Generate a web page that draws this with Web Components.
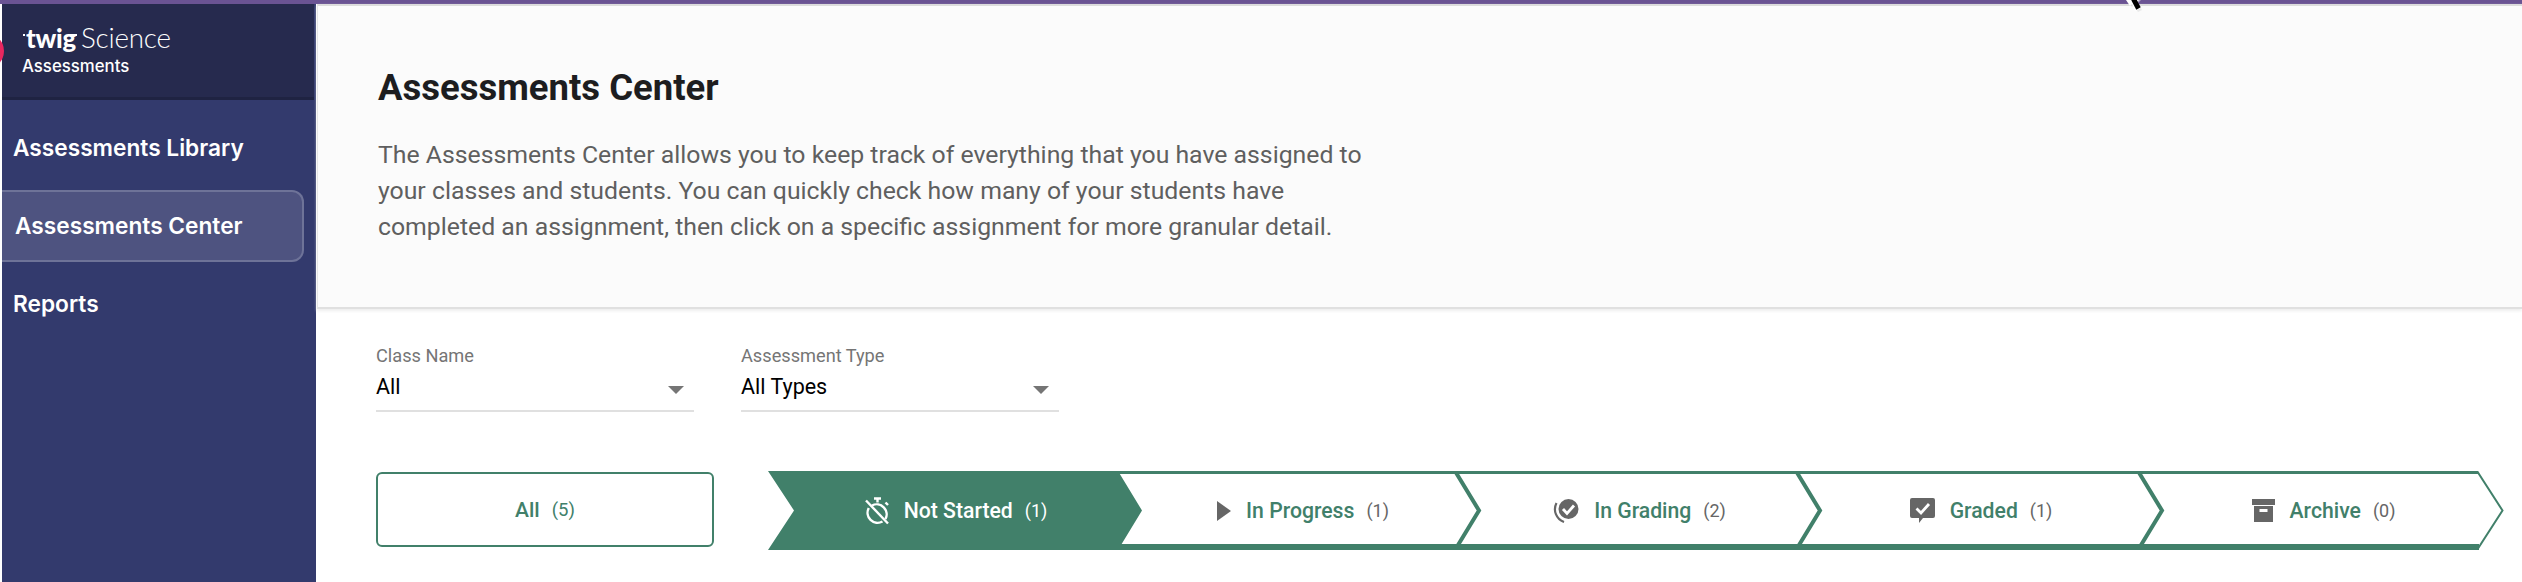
<!DOCTYPE html>
<html><head><meta charset="utf-8"><style>
html,body{margin:0;padding:0;background:#fff;height:582px;overflow:hidden}
body{font-family:Roboto,sans-serif}
</style></head><body>
<app-shell>
<side-bar slot="side">
<nav-item>Assessments Library</nav-item>
<nav-item active>Assessments Center</nav-item>
<nav-item>Reports</nav-item>
</side-bar>
<intro-panel slot="main" heading="Assessments Center">The Assessments Center allows you to keep track of everything that you have assigned to<br>your classes and students. You can quickly check how many of your students have<br>completed an assignment, then click on a specific assignment for more granular detail.</intro-panel>
<filter-row slot="main">
<select-field label="Class Name" value="All"></select-field>
<select-field label="Assessment Type" value="All Types"></select-field>
</filter-row>
<status-row slot="main">
<all-button>All<span slot="count">(5)</span></all-button>
<chevron-strip>
<chevron-step kind="active" w="374" depth="24" pad="2" first icon="timer" label="Not Started" count="(1)"></chevron-step>
<chevron-step w="364" overlap="24" pad="6" icon="play" label="In Progress" count="(1)"></chevron-step>
<chevron-step w="367" pad="0" icon="grading" label="In Grading" count="(2)"></chevron-step>
<chevron-step w="368" pad="0" icon="graded" label="Graded" count="(1)"></chevron-step>
<chevron-step kind="last" w="365" pad="4" icon="archive" label="Archive" count="(0)"></chevron-step>
</chevron-strip>
</status-row>
</app-shell>
<script>
function def(name,html){customElements.define(name,class extends HTMLElement{constructor(){super();const r=this.attachShadow({mode:'open'});r.innerHTML=typeof html==='function'?html(this):html;}})}
def('app-shell',`<style>
:host{display:block;position:relative;width:2522px;height:582px;overflow:hidden;background:#fff}
.top{height:4px;background:#6a5393}
.body{display:flex;height:578px;padding-left:2px}
.main{flex:1;min-width:0;display:flex;flex-direction:column;padding-left:1px}
.dot{position:absolute;left:-32px;top:33px;width:36px;height:36px;border-radius:50%;background:#e8275f}
.cur{position:absolute;left:2124px;top:0}
</style><div class="top"></div><div class="body"><slot name="side"></slot><div class="main"><slot name="main"></slot></div></div>
<div class="dot"></div>
<svg class="cur" width="28" height="16" viewBox="0 0 28 16"><path d="M3 0L8 7 10 5 14 12 18 10 14 3 17 0Z" fill="#ddd" opacity=".6"/><path d="M2 0L6 6 8 4 11 11 17 8 13 2 15 0Z" fill="#fff"/><path d="M9.500 -1L14.500 8.500" stroke="#000" stroke-width="5"/></svg>`);
def('side-bar',`<style>
:host{display:block;width:314px;height:578px;background:#333a6d;flex:none}
.brand{width:312px;height:96px;box-sizing:border-box;background:#262a4e;border-bottom:3px solid #1f2342;padding:19px 0 0 20px;color:#fff}
.logo{font-family:Lato,sans-serif;line-height:30px;white-space:nowrap;display:flex;align-items:baseline;margin-left:4px;position:relative}
.logo b{font-weight:900;font-size:25.7px;letter-spacing:-.2px}
.logo i{font-style:normal;font-weight:300;font-size:27.800px;margin-left:5px;letter-spacing:-.2px}
.logo::before,.logo::after{content:"";position:absolute;width:2px;height:2px;background:#fff;top:11px}
.logo::before{left:-3px}.logo::after{left:49px}
.sub{font-family:Inter,sans-serif;font-weight:500;font-size:16.800px;line-height:20px;margin-top:3px}
.nav{padding-top:12px}
</style><div class="brand"><div class="logo"><b>twig</b><i>Science</i></div><div class="sub">Assessments</div></div><div class="nav"><slot></slot></div>`);
def('nav-item',`<style>
:host{box-sizing:border-box;width:302px;height:72px;margin-bottom:6px;display:flex;align-items:center;padding:0 0 2px 11px;color:#fff;font-family:Inter,sans-serif;font-weight:600;font-size:22.7px;white-space:nowrap}
:host([active]){background:#4e5380;border:2px solid #6e7398;border-left:0;border-radius:0 12px 12px 0;padding-left:13px}
</style><slot></slot>`);
def('intro-panel',h=>`<style>
:host{display:block;box-sizing:border-box;height:305px;background:#fbfbfb;border-top:2px solid #dcdcdc;border-left:1px solid #e4e4e4;border-bottom:2px solid #e0e0e0;box-shadow:0 2px 3px #eee;padding:61px 0 0 60px}
h1{margin:0;font-weight:700;font-size:36.500px;line-height:42px;color:#1d1d1f}
p{margin:27.500px 0 0;font-size:24.800px;line-height:36px;color:#5f5f5f;white-space:nowrap}
</style><h1>${h.getAttribute('heading')}</h1><p><slot></slot></p>`);
def('filter-row',`<style>
:host{display:flex;gap:47px;padding:36px 0 0 59px}
</style><slot></slot>`);
def('select-field',h=>`<style>
:host{display:block;width:318px;height:67px;box-sizing:border-box;border-bottom:2px solid #e0e0e0;position:relative}
.l{font-size:18.200px;line-height:22px;color:#757575}
.v{font-size:21.500px;line-height:28px;color:#000;margin-top:6px}
.a{position:absolute;right:10px;top:41px;width:0;height:0;border:8px solid transparent;border-top:8px solid #757575;border-bottom:0}
</style><div class="l">${h.getAttribute('label')}</div><div class="v">${h.getAttribute('value')}</div><div class="a"></div>`);
def('status-row',`<style>
:host{display:flex;align-items:flex-start;gap:54px;padding:59px 0 0 59px}
</style><slot></slot>`);
def('all-button',`<style>
:host{display:flex;align-items:center;justify-content:center;gap:12px;box-sizing:border-box;width:338px;height:75px;margin-top:1px;border:2px solid #41806a;border-radius:6px;color:#41806a;font-weight:500;font-size:21px}
::slotted(span){font-weight:400;font-size:18.500px}
</style><slot></slot><slot name="count"></slot>`);
def('chevron-strip',`<style>
:host{display:flex;height:79px}
</style><slot></slot>`);
const ICONS={
timer:`<svg width="24" height="28" viewBox="0 0 24 28" fill="none" stroke="#fff" stroke-width="2.400"><path d="M9 1.500h7M12.500 1.500v4"/><path d="M20.500 5.500l2.500 2.500"/><path d="M7 8.500A10 10 0 0 1 20.500 22M3.800 11A10 10 0 0 0 17.500 24.500"/><path d="M1 3.500l22 23"/></svg>`,
play:`<svg width="14" height="20" viewBox="0 0 14 20"><path d="M0 0L14 10 0 20Z" fill="#666"/></svg>`,
grading:`<svg width="26" height="25" viewBox="0 0 26 25"><circle cx="15.500" cy="11" r="10" fill="#666"/><path d="M10 11l4 4.500L21 7.500" fill="none" stroke="#fff" stroke-width="2.800"/><path d="M3.500 5A13.500 13.500 0 0 0 11 24" fill="none" stroke="#666" stroke-width="2.200"/></svg>`,
graded:`<svg width="25" height="25" viewBox="0 0 25 25"><path d="M2 0H23a2 2 0 0 1 2 2V18a2 2 0 0 1-2 2H13l-4 5V20H2a2 2 0 0 1-2-2V2a2 2 0 0 1 2-2Z" fill="#666"/><path d="M6.500 10.500l4.500 4.500 8-9" fill="none" stroke="#fff" stroke-width="2.800"/></svg>`,
archive:`<svg width="23" height="23" viewBox="0 0 23 23"><path d="M0 0H23V6H0ZM2 7H21V23H2Z" fill="#666"/><rect x="7.500" y="10" width="8" height="3" fill="#fff"/></svg>`};
def('chevron-step',h=>{
const w=+h.getAttribute('w'),k=h.getAttribute('kind')||'',first=h.hasAttribute('first');
const ov=h.getAttribute('overlap')||26,d=+(h.getAttribute('depth')||26);
const H=79,t=w-d,m=39.5;
let shape;
if(k==='active')shape=`<path d="M0 0H${t}L${w} ${m} ${t} ${H}H0L26 ${m}Z" fill="#41806a"/>`;
else{
const sw=k==='last'?2:4, tip=k==='last'?w-1.500:w-3;
shape=`<path d="M0 1.500H${t}" stroke="#41806a" stroke-width="3" fill="none"/><path d="M0 76H${t+1}" stroke="#41806a" stroke-width="6" fill="none"/><path d="M${t-1} 0L${tip} ${m} ${t-1} ${H}" stroke="#41806a" stroke-width="${sw}" fill="none"/>`;
}
return `<style>
:host{display:block;position:relative;width:${w}px;height:79px;flex:none;${first?'':`margin-left:-${ov}px;`}}
svg.bg{position:absolute;left:0;top:0}
.c{position:relative;box-sizing:border-box;height:100%;display:flex;align-items:center;justify-content:center;padding-left:${h.getAttribute('pad')||0}px;font-size:21.200px;font-weight:500;color:${k==='active'?'#fff':'#41806a'};white-space:nowrap}
.i{display:flex;margin-right:15px}
.n{margin-left:12px;font-weight:400;font-size:18px;color:${k==='active'?'#fff':'#666'}}
</style><svg class="bg" width="${w}" height="79" viewBox="0 0 ${w} 79">${shape}</svg><div class="c"><span class="i">${ICONS[h.getAttribute('icon')]}</span><span>${h.getAttribute('label')}</span><span class="n">${h.getAttribute('count')}</span></div>`});
</script>
</body></html>
